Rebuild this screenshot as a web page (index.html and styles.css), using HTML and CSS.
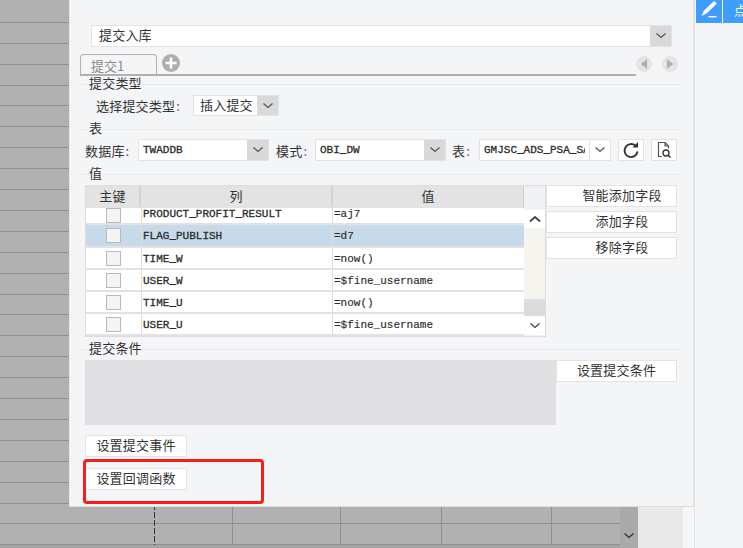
FILE: index.html
```html
<!DOCTYPE html>
<html lang="zh">
<head>
<meta charset="utf-8">
<title>提交入库</title>
<link rel="stylesheet" href="styles.css">
</head>
<body>
<svg class="defs" width="0" height="0" aria-hidden="true">
  <symbol id="chev-down" viewBox="0 0 12 8"><path d="M1.500 1.500 6 5.500l4.500-4" fill="none" stroke="currentColor" stroke-width="1.300"/></symbol>
  <symbol id="chev-up" viewBox="0 0 12 8"><path d="M1 6.500 6 2l5 4.500" fill="none" stroke="currentColor" stroke-width="1.800"/></symbol>
</svg>
<div class="app">
  <div class="sheet">
    <div class="grid"></div>
    <div class="sheet-scroll"><svg class="sheet-chev"><use href="#chev-down"/></svg></div>
    <div class="sheet-gap"></div>
    <div class="sheet-edge"></div>
  </div>
  <aside class="side">
    <div class="side-btn side-btn-icon">
      <svg width="20" height="18" viewBox="0 0 20 18"><path d="M14.500 0.500c1-.6 2.800.8 3 2.300L8 12.200 2.500 15l2.300-5.200z" fill="#fff"/><path d="M9.500 15.700h8" stroke="#fff" stroke-width="1.400"/></svg>
    </div>
    <div class="side-btn side-btn-text">点</div>
  </aside>
</div>

<section class="dialog">
  <div class="select select-top">
    <span class="select-value">提交入库</span>
    <span class="select-arrow"><svg><use href="#chev-down"/></svg></span>
  </div>

  <div class="tabs">
    <div class="tab">提交1</div>
    <svg class="tab-add" width="18" height="18" viewBox="0 0 18 18"><circle cx="9" cy="9" r="9" fill="#aeaeae"/><path d="M9 3.500v11M3.500 9h11" stroke="#fff" stroke-width="2.600"/></svg>
    <div class="tab-nav">
      <span class="nav-dot"><i class="tri tri-left"></i></span>
      <span class="nav-dot"><i class="tri tri-right"></i></span>
    </div>
  </div>

  <h3 class="head"><span>提交类型</span></h3>
  <div class="row row-type">
    <label class="label">选择提交类型<em>:</em></label>
    <div class="select select-type">
      <span class="select-value">插入提交</span>
      <span class="select-arrow"><svg><use href="#chev-down"/></svg></span>
    </div>
  </div>

  <h3 class="head head-table"><span>表</span></h3>
  <div class="row row-db">
    <label class="label">数据库<em>:</em></label>
    <div class="select select-db mono">
      <span class="select-value">TWADDB</span>
      <span class="select-arrow"><svg><use href="#chev-down"/></svg></span>
    </div>
    <label class="label label-mode">模式<em>:</em></label>
    <div class="select select-db mono">
      <span class="select-value">OBI_DW</span>
      <span class="select-arrow"><svg><use href="#chev-down"/></svg></span>
    </div>
    <label class="label label-table">表<em>:</em></label>
    <div class="select select-tbl mono">
      <span class="select-value">GMJSC_ADS_PSA_SALES</span>
      <span class="select-arrow arrow-plain"><svg><use href="#chev-down"/></svg></span>
    </div>
    <button class="icon-btn icon-refresh">
      <svg width="18" height="18" viewBox="0 0 18 18"><path d="M13.500 4.800A6.500 6.500 0 1 0 15.500 10.500" fill="none" stroke="#333" stroke-width="1.900"/><path d="M10.500 6.500h5.500V1z" fill="#333"/></svg>
    </button>
    <button class="icon-btn">
      <svg width="18" height="18" viewBox="0 0 18 18"><path d="M7 15.500H3.500v-14H10l3.500 3.500v2.500M10 1.500V5h3.500" fill="none" stroke="#555" stroke-width="1.200"/><circle cx="11" cy="12" r="3" fill="none" stroke="#333" stroke-width="1.300"/><path d="m13 14 2.500 2.500" stroke="#333" stroke-width="1.500"/></svg>
    </button>
  </div>

  <h3 class="head head-table"><span>值</span></h3>
  <div class="values">
    <div class="table">
      <div class="table-main">
        <div class="thead">
          <div class="c1">主键</div>
          <div class="c2">列</div>
          <div class="c3">值</div>
        </div>
        <div class="tbody mono">
          <div class="tr tr-partial"><div class="c1"><i class="check"></i></div><div class="c2">PRODUCT_PROFIT_RESULT</div><div class="c3">=aj7</div></div>
          <div class="tr tr-selected"><div class="c1"><i class="check"></i></div><div class="c2">FLAG_PUBLISH</div><div class="c3">=d7</div></div>
          <div class="tr"><div class="c1"><i class="check"></i></div><div class="c2">TIME_W</div><div class="c3">=now()</div></div>
          <div class="tr"><div class="c1"><i class="check"></i></div><div class="c2">USER_W</div><div class="c3">=$fine_username</div></div>
          <div class="tr"><div class="c1"><i class="check"></i></div><div class="c2">TIME_U</div><div class="c3">=now()</div></div>
          <div class="tr"><div class="c1"><i class="check"></i></div><div class="c2">USER_U</div><div class="c3">=$fine_username</div></div>
        </div>
      </div>
      <div class="vscroll">
        <div class="vs-top"></div>
        <div class="vs-btn"><svg><use href="#chev-up"/></svg></div>
        <div class="vs-track"></div>
        <div class="vs-thumb"></div>
        <div class="vs-btn vs-btn-down"><svg><use href="#chev-down"/></svg></div>
      </div>
    </div>
    <div class="actions">
      <button class="btn btn-wide btn-smart">智能添加字段</button>
      <button class="btn btn-wide">添加字段</button>
      <button class="btn btn-wide">移除字段</button>
    </div>
  </div>

  <h3 class="head head-cond"><span>提交条件</span></h3>
  <div class="cond">
    <div class="cond-box"></div>
    <button class="btn btn-wide">设置提交条件</button>
  </div>

  <button class="btn btn-small btn-event">设置提交事件</button>
  <button class="btn btn-small btn-callback">设置回调函数</button>
  <div class="highlight"></div>
</section>
</body>
</html>
```

FILE: styles.css
```css
* { box-sizing: border-box; }
html, body { margin: 0; height: 100%; overflow: hidden; }
body {
  font-family: "Noto Sans CJK SC", "Liberation Sans", sans-serif;
  font-size: 13px;
  color: #333;
  background: #f4f5f7;
}
.defs { position: absolute; }

/* background */
.app { display: flex; height: 548px; width: 743px; }
.sheet { display: flex; width: 694px; height: 548px; }
.grid {
  width: 620px;
  height: 548px;
  background-color: #b1b1b1;
  border-bottom: 3px solid #a4a4a4;
  background-image:
    repeating-linear-gradient(to bottom, #333 0, #333 6px, #b1b1b1 6px, #b1b1b1 8px),
    linear-gradient(#8e8e8e, #8e8e8e),
    linear-gradient(#8e8e8e, #8e8e8e),
    linear-gradient(#8e8e8e, #8e8e8e),
    linear-gradient(#8e8e8e, #8e8e8e),
    repeating-linear-gradient(to bottom, transparent 0, transparent 19.900px, #909090 19.900px, #909090 20.900px);
  background-size: 1px 100%, 1px 100%, 1px 100%, 1px 100%, 1px 100%, 100% 100%;
  background-position: 154px 0, 232px 0, 340px 0, 441px 0, 551px 0, 0 2px;
  background-repeat: no-repeat;
}
.sheet-scroll {
  width: 18px;
  background: #aaa;
  display: flex;
  align-items: flex-end;
  justify-content: center;
  padding-bottom: 8px;
}
.sheet-chev { width: 12px; height: 8px; color: #2f2f2f; }
.sheet-gap { width: 45px; background: #e9e9e9; }
.sheet-edge { flex: 1; background: #f5f6f8; }

.side {
  flex: 1;
  display: flex;
  gap: 1px;
  padding-left: 1px;
  border-left: 1px solid #e2e3e5;
  overflow: hidden;
  align-items: flex-start;
}
.side-btn {
  height: 23px;
  background: #3f9dfb;
  color: #fff;
  flex-shrink: 0;
}
.side-btn-icon { width: 26px; padding: 0 0 0 3px; }
.side-btn-icon svg { display: block; margin-top: 1px; }
.side-btn-text { width: 50px; padding-left: 11px; line-height: 19px; white-space: nowrap; }

/* dialog */
.dialog {
  position: absolute;
  left: 69px;
  top: 0;
  width: 625px;
  height: 507px;
  padding: 25px 0 0 0;
  background: #f4f5f7;
  border-left: 1px solid #e4e5e7;
  border-right: 1px solid #e4e5e7;
  border-bottom: 1px solid #dcdcdc;
}
.mono {
  font-family: "Liberation Mono", monospace;
  font-size: 11px;
  color: #2c2c2c;
  -webkit-text-stroke: .3px #2c2c2c;
}

.select {
  display: flex;
  height: 22px;
  background: #fff;
  border: 1px solid #e2e3e5;
}
.select-value { flex: 1; min-width: 0; overflow: hidden; white-space: nowrap; line-height: 20px; }
.select-arrow {
  width: 21px;
  background: #d8d9db;
  display: flex;
  align-items: center;
  justify-content: center;
  flex-shrink: 0;
}
.select-arrow svg { width: 12px; height: 8px; color: #555; }
.arrow-plain { background: #fff; border-left: 1px solid #e2e3e5; }

.select-top { margin-left: 21px; width: 581px; }
.select-top .select-value { padding-left: 7px; line-height: 18px; font-size: 13px; letter-spacing: .2px; }

/* tabs */
.tabs {
  display: flex;
  align-items: flex-start;
  margin: 7px 0 0 10px;
  height: 22px;
  width: 556px;
  position: relative;
  border-bottom: 2px solid #b0b0b0;
}
.tab {
  width: 77px;
  height: 22px;
  background: #f4f5f7;
  border: 1px solid #b0b0b0;
  border-bottom: 2px solid #b0b0b0;
  border-radius: 4px 4px 0 0;
  padding-left: 10px;
  line-height: 22px;
  color: #8a8a8a;
  font-size: 13px;
}
.tab-add { margin: 0 0 0 5px; }
.tab-nav { display: flex; gap: 10px; position: absolute; left: 556px; top: 2px; }
.nav-dot {
  width: 16px;
  height: 16px;
  border-radius: 50%;
  background: #e4e4e6;
  display: flex;
  align-items: center;
  justify-content: center;
  flex-shrink: 0;
}
.tri { width: 0; height: 0; border-top: 5px solid transparent; border-bottom: 5px solid transparent; }
.tri-left { border-right: 6px solid #b0b0b0; }
.tri-right { border-left: 6px solid #b0b0b0; }

/* section heads */
.head {
  display: flex;
  align-items: center;
  height: 16px;
  margin: 0 0 0 12px;
  width: 598px;
  font-size: 13px;
  font-weight: normal;
  line-height: 16px;
  letter-spacing: .2px;
}
.head span { margin-top: -2px; }
.head::before { content: ""; width: 7px; height: 1px; background: #e8e9eb; }
.head::after { content: ""; flex: 1; height: 1px; background: #e8e9eb; }
.head-table { margin-top: 5px; }
.head-cond { margin-top: 4px; }

/* rows */
.row { display: flex; align-items: center; }
.label { white-space: nowrap; letter-spacing: .2px; }
.label em { font-style: normal; color: #7a4a9a; margin-left: 1px; }
.row-type { margin: 3px 0 0 26px; height: 21px; }
.row-type .label { width: 97px; }
.select-type { width: 86px; height: 21px; }
.select-type .select-value { padding-left: 6px; line-height: 18px; font-size: 13px; letter-spacing: .2px; }

.row-db { margin: 2px 0 0 15px; height: 22px; }
.row-db .label { width: 53px; }
.row-db .label-mode { width: 39px; margin-left: 7px; }
.row-db .label-table { width: 27px; margin-left: 6px; }
.select-db { width: 131px; }
.select-db .select-value, .select-tbl .select-value { padding-left: 4px; }
.select-tbl { width: 132px; }
.select-tbl .select-value { margin-right: 4px; }
.icon-btn {
  width: 26px;
  height: 22px;
  margin-left: 7px;
  padding: 0;
  background: #fff;
  border: 1px solid #e2e3e5;
  display: flex;
  align-items: center;
  justify-content: center;
}

/* values */
.values { display: flex; margin: 3px 0 0 15px; }
.table {
  display: flex;
  width: 461px;
  height: 152px;
  background: #e2e2e4;
  border: 1px solid #dcdcde;
}
.table-main { width: 438px; display: flex; flex-direction: column; }
.thead, .tr { display: flex; }
.thead { height: 21px; background: #e3e3e4; line-height: 19px; text-align: center; letter-spacing: .2px; }
.thead .c1, .thead .c2 { border-right: 2px solid #d2d2d2; }
.thead .c3 { border-right: 1px solid #cfcfcf; }
.c1 { width: 55px; flex-shrink: 0; }
.c2 { width: 192px; flex-shrink: 0; }
.c3 { flex: 1; }
.tbody { margin-top: 1px; height: 128px; display: flex; flex-direction: column; gap: 2px; }
.tr { height: 20px; background: #fff; align-items: center; flex-shrink: 0; }
.tr .c2 { height: 100%; border-right: 1px solid #dedede; border-left: 1px solid #dedede; padding-left: 1px; padding-top: 1px; line-height: 20px; }
.tr .c1 { display: flex; justify-content: center; }
.tr .c3 { height: 100%; padding-left: 1px; padding-top: 1px; line-height: 20px; -webkit-text-stroke: .15px #2c2c2c; }
.tr-partial { height: 15px; align-items: flex-end; overflow: hidden; }
.tr-partial .c2, .tr-partial .c3 { padding-top: 0; line-height: 12px; }
.tr-partial .check { margin-top: -6px; }
.tr-selected { height: 21px; background: #c6dae9; }
.tr-selected .c2, .tr-selected .c3 { padding-top: 1px; line-height: 21px; }
.check { display: block; width: 15px; height: 15px; background: #f4f4f4; border: 1px solid #b9b9b9; }
.vscroll { flex: 1; display: flex; flex-direction: column; background: #f0f1f3; }
.vs-top { height: 24px; background: #f0f1f3; }
.vs-btn {
  height: 18px;
  background: #fff;
  display: flex;
  align-items: center;
  justify-content: center;
}
.vs-btn svg { width: 12px; height: 8px; color: #444; }
.vs-btn-down { height: 19px; }
.vs-track { height: 71px; background: #f6f4ef; }
.vs-thumb { height: 17px; background: #dcdcdc; }

.actions { display: flex; flex-direction: column; }
.btn {
  font-family: inherit;
  font-size: 13px;
  letter-spacing: .2px;
  color: #333;
  background: #fff;
  border: 1px solid #e2e3e5;
  padding: 0 0 3px;
  line-height: 1;
}
.btn-wide { width: 131px; height: 22px; margin-top: 4px; }
.actions .btn { padding-left: 21px; }
.actions .btn-smart { margin-top: 0; }

.cond { display: flex; align-items: flex-start; margin: 3px 0 0 15px; height: 65px; }
.cond-box { width: 471px; height: 65px; background: #e0e0e2; }
.cond .btn-wide { width: 121px; margin-top: 0; }

.btn-small { display: block; width: 102px; height: 22px; margin-left: 15px; }
.btn-event { margin-top: 10px; }
.btn-callback { margin-top: 11px; }

.highlight {
  position: absolute;
  left: 13px;
  top: 459px;
  width: 181px;
  height: 45px;
  border: 3px solid #f5201a;
  border-radius: 4px;
}
```
